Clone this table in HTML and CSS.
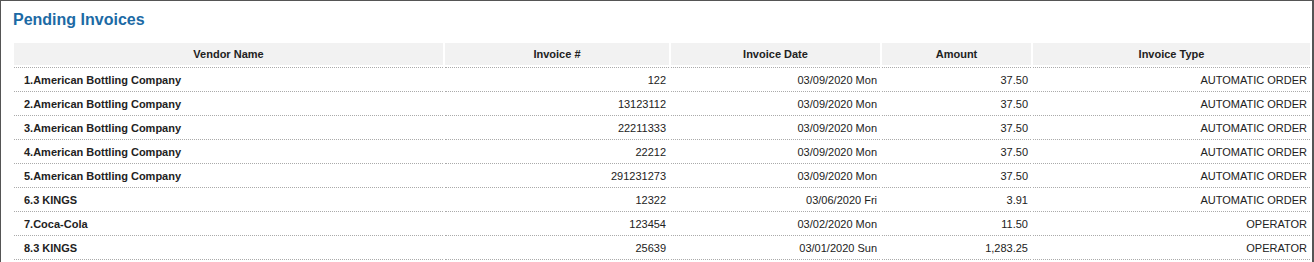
FILE: index.html
```html
<!DOCTYPE html>
<html>
<head>
<meta charset="utf-8">
<link rel="stylesheet" href="styles.css">
</head>
<body>
<div class="panel">
  <h1 class="title">Pending Invoices</h1>
  <table class="grid">
    <colgroup>
      <col class="c-vendor"><col class="c-num"><col class="c-date"><col class="c-amt"><col class="c-type">
    </colgroup>
    <thead>
      <tr><th>Vendor Name</th><th>Invoice #</th><th>Invoice Date</th><th>Amount</th><th>Invoice Type</th></tr>
    </thead>
    <tbody>
      <tr><td class="vendor">1.American Bottling Company</td><td>122</td><td>03/09/2020 Mon</td><td>37.50</td><td>AUTOMATIC ORDER</td></tr>
      <tr><td class="vendor">2.American Bottling Company</td><td>13123112</td><td>03/09/2020 Mon</td><td>37.50</td><td>AUTOMATIC ORDER</td></tr>
      <tr><td class="vendor">3.American Bottling Company</td><td>22211333</td><td>03/09/2020 Mon</td><td>37.50</td><td>AUTOMATIC ORDER</td></tr>
      <tr><td class="vendor">4.American Bottling Company</td><td>22212</td><td>03/09/2020 Mon</td><td>37.50</td><td>AUTOMATIC ORDER</td></tr>
      <tr><td class="vendor">5.American Bottling Company</td><td>291231273</td><td>03/09/2020 Mon</td><td>37.50</td><td>AUTOMATIC ORDER</td></tr>
      <tr><td class="vendor">6.3 KINGS</td><td>12322</td><td>03/06/2020 Fri</td><td>3.91</td><td>AUTOMATIC ORDER</td></tr>
      <tr><td class="vendor">7.Coca-Cola</td><td>123454</td><td>03/02/2020 Mon</td><td>11.50</td><td>OPERATOR</td></tr>
      <tr><td class="vendor">8.3 KINGS</td><td>25639</td><td>03/01/2020 Sun</td><td>1,283.25</td><td>OPERATOR</td></tr>
    </tbody>
  </table>
</div>
</body>
</html>
```

FILE: styles.css
```css
html, body {
  margin: 0;
  padding: 0;
  background: #fff;
}
body {
  font-family: "Liberation Sans", Arial, sans-serif;
  color: #222;
}
.panel {
  width: 1314px;
  height: 270px;
  border-left: 1px solid #555;
  border-top: 1px solid #555;
  border-right: 2px solid #555;
  padding-left: 11px;
  box-sizing: border-box;
}
.title {
  margin: 0;
  padding: 9px 0 0 1px;
  height: 32px;
  box-sizing: border-box;
  font-size: 16px;
  font-weight: bold;
  line-height: 20px;
  color: #1c6aa5;
}
.grid {
  border-collapse: separate;
  border-spacing: 2px 0;
  table-layout: fixed;
  width: 1300px;
  margin-top: 10px;
  font-size: 11px;
}
.c-vendor { width: 429px; }
.c-num { width: 224px; }
.c-date { width: 209px; }
.c-amt { width: 149px; }
.c-type { width: 277px; }
.grid th {
  background: #f2f2f2;
  height: 22px;
  padding: 0;
  font-weight: bold;
  text-align: center;
  border-bottom: 2px solid #fff;
  color: #222;
}
.grid td {
  height: 23px;
  padding: 0 3px 0 0;
  text-align: right;
  border-top: 1px dotted #aaa;
  color: #222;
  white-space: nowrap;
}
.grid tbody tr:last-child td {
  border-bottom: 1px dotted #aaa;
}
.grid td.vendor {
  text-align: left;
  font-weight: bold;
  padding-left: 10px;
}
```
